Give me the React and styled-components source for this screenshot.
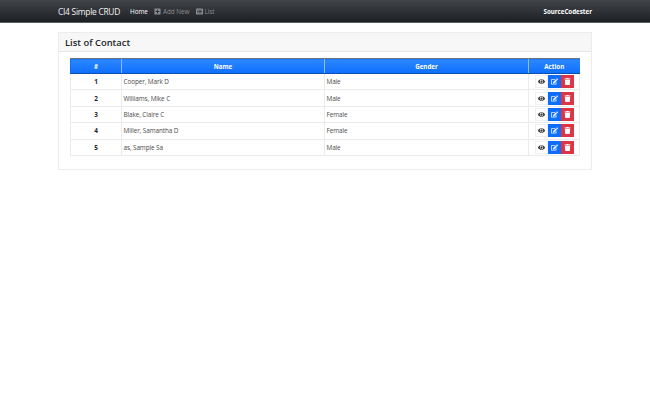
import styled, { createGlobalStyle } from 'styled-components';
import { FaEye, FaEdit, FaTrash, FaPlusSquare, FaListAlt } from 'react-icons/fa';

const GlobalStyle = createGlobalStyle`
  * { box-sizing: border-box; }
  html, body { margin: 0; padding: 0; background: #fff; }
  body { font-family: "Open Sans", "Noto Sans", "Liberation Sans", sans-serif; color: #212529; }
`;

const Navbar = styled.nav`
  height: 23px;
  display: flex;
  align-items: center;
  padding: 0 58px;
  background: linear-gradient(to bottom, #41454a, #1c1f23);
  border-bottom: 1px solid #5b5f62;
`;

const Brand = styled.span`
  font-size: 8.4px;
  letter-spacing: -0.25px;
  color: #f2f2f2;
  margin-right: 10px;
`;

const NavLink = styled.span`
  display: flex;
  align-items: center;
  gap: 1.5px;
  font-size: 6.4px;
  letter-spacing: -0.05px;
  margin-right: 6.5px;
  color: ${(p) => (p.$active ? '#fff' : '#8a8d90')};
  svg { font-size: 7px; }
`;

const Owner = styled.span`
  margin-left: auto;
  font-size: 6.2px;
  font-weight: 700;
  color: #fff;
`;

const Card = styled.section`
  width: 534px;
  height: 138px;
  margin: 9px 0 0 58px;
  border: 1px solid #ececec;
`;

const CardHeader = styled.header`
  height: 19px;
  display: flex;
  align-items: center;
  padding-left: 6px;
  background: #f7f7f7;
  border-bottom: 1px solid #e6e6e6;
  font-size: 9.4px;
  font-weight: 600;
  color: #212529;
`;

const CardBody = styled.div`
  padding: 6px 11px 0;
`;

const Table = styled.table`
  width: 509px;
  border-collapse: collapse;
  table-layout: fixed;
`;

const HeadCell = styled.th`
  height: 15px;
  padding: 0;
  background: linear-gradient(to bottom, #2c88ff, #0d6efd);
  border-top: 1px solid #6c757d;
  border-bottom: 1px solid #0a4fb3;
  border-left: 1px solid #8dbcfb;
  color: #fff;
  font-size: 6.2px;
  font-weight: 700;
  text-align: center;
  width: ${(p) => p.$width}px;
  &:first-child { border-left-color: #0d6efd; }
`;

const Row = styled.tr`
  height: 16.4px;
`;

const Cell = styled.td`
  padding: 0 0 0 1.5px;
  border: 1px solid #e9ecef;
  color: #4a4a4a;
  font-size: 6.4px;
  letter-spacing: -0.1px;
  white-space: nowrap;
`;

const NumCell = styled(Cell)`
  padding: 0;
  text-align: center;
  font-weight: 700;
  color: #212529;
`;

const ActionCell = styled(Cell)`
  padding: 0;
`;

const ActionGroup = styled.div`
  display: flex;
  justify-content: center;
  height: 13px;
`;

const ActionButton = styled.span`
  width: 13px;
  display: flex;
  align-items: center;
  justify-content: center;
  font-size: 7px;
  background: ${(p) => p.$bg};
  color: ${(p) => p.$color};
  border: ${(p) => (p.$outline ? '1px solid #f0f0f0' : '0')};
`;

const contacts = [
  { id: 1, name: 'Cooper, Mark D', gender: 'Male' },
  { id: 2, name: 'Williams, Mike C', gender: 'Male' },
  { id: 3, name: 'Blake, Claire C', gender: 'Female' },
  { id: 4, name: 'Miller, Samantha D', gender: 'Female' },
  { id: 5, name: 'as, Sample Sa', gender: 'Male' },
];

export default function App() {
  return (
    <>
      <GlobalStyle />
      <Navbar>
        <Brand>CI4 Simple CRUD</Brand>
        <NavLink $active>Home</NavLink>
        <NavLink><FaPlusSquare /> Add New</NavLink>
        <NavLink><FaListAlt /> List</NavLink>
        <Owner>SourceCodester</Owner>
      </Navbar>
      <Card>
        <CardHeader>List of Contact</CardHeader>
        <CardBody>
          <Table>
            <thead>
              <tr>
                <HeadCell $width={51}>#</HeadCell>
                <HeadCell $width={203}>Name</HeadCell>
                <HeadCell $width={204}>Gender</HeadCell>
                <HeadCell $width={51}>Action</HeadCell>
              </tr>
            </thead>
            <tbody>
              {contacts.map((c) => (
                <Row key={c.id}>
                  <NumCell>{c.id}</NumCell>
                  <Cell>{c.name}</Cell>
                  <Cell>{c.gender}</Cell>
                  <ActionCell>
                    <ActionGroup>
                      <ActionButton $bg="#fff" $color="#333" $outline><FaEye /></ActionButton>
                      <ActionButton $bg="#0d6efd" $color="#e8f1ff"><FaEdit /></ActionButton>
                      <ActionButton $bg="#dc3545" $color="#fff"><FaTrash /></ActionButton>
                    </ActionGroup>
                  </ActionCell>
                </Row>
              ))}
            </tbody>
          </Table>
        </CardBody>
      </Card>
    </>
  );
}
